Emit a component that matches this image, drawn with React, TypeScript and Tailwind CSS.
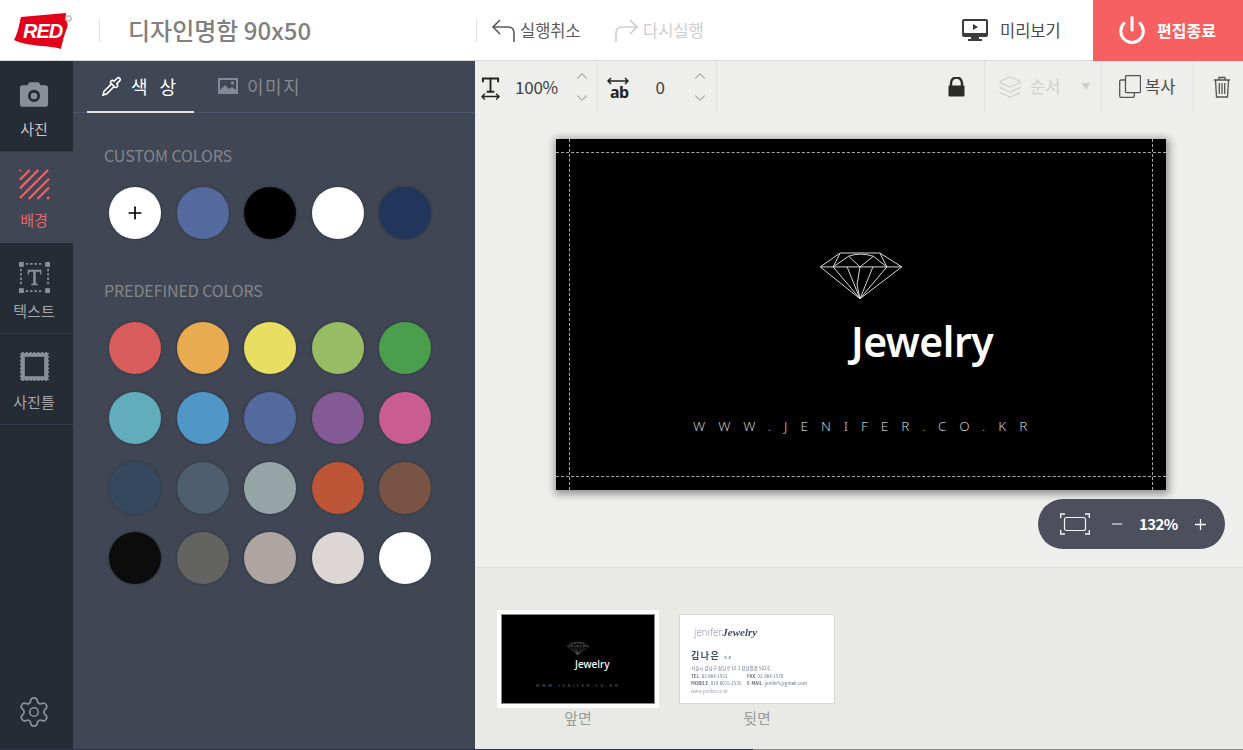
import React from 'react';
import { ChevronUp, ChevronDown, Layers, Pipette, Plus, Minus, Power, Settings } from 'lucide-react';

const customColors = ['#ffffff', '#546a9e', '#000000', '#ffffff', '#22355a'];
const predefinedColors = [
  '#d95c5c', '#e8ab50', '#e8df62', '#97bc64', '#4a9e4c',
  '#62adbb', '#5096c6', '#546a9e', '#835a96', '#c95d8f',
  '#34495f', '#4d5e6e', '#95a5a6', '#bc5637', '#795444',
  '#0c0c0c', '#636360', '#aea5a3', '#dcd7d4', '#ffffff',
];

function Swatch({ color, children }: { color: string; children?: React.ReactNode }) {
  return (
    <div
      className="flex h-[52px] w-[52px] items-center justify-center rounded-full shadow-[0_0_2px_1px_rgba(30,35,45,0.3)]"
      style={{ backgroundColor: color }}
    >
      {children}
    </div>
  );
}

function Logo() {
  return (
    <div className="relative mt-[3px] h-[38px] w-[60px]">
      <svg width="60" height="38" viewBox="0 0 60 38" className="absolute left-0 top-0">
        <path d="M7 4 L52 0 C51 6 55 9 53 15 C50 22 48 30 47 36 C36 32 14 34 0 27 C4 20 5 12 7 4 Z" fill="#e3001b" />
      </svg>
      <span className="absolute left-[9px] top-[4px] font-['Liberation_Sans'] text-[20px] font-bold italic leading-[28px] tracking-[-1px] text-white">
        RED
      </span>
      <span className="absolute left-[51px] top-[2px] h-[7px] w-[7px] rounded-full border-2 border-[#c9c9c9]" />
    </div>
  );
}

function Diamond({ width = 84, color = '#d8d8d8' }: { width?: number; color?: string }) {
  return (
    <svg width={width} height={width * 0.58} viewBox="0 0 84 49" fill="none" stroke={color} strokeWidth="1">
      <path d="M1 16 L21 2 H61 L83 16 L41 48 Z" />
      <path d="M1 16 H83" />
      <path d="M21 2 L14 16 L29.5 5.3 L41 16 L54.5 5.3 L68 16 L61 2" />
      <path d="M29.5 5.3 Q41 1 54.5 5.3" />
      <path d="M14 16 L41 48 L28 16 M41 16 L38 34 L41 48 M54 16 L41 48 L68 16" />
    </svg>
  );
}

function NavItem({ label, icon, active, light }: { label: string; icon: React.ReactNode; active?: boolean; light?: boolean }) {
  return (
    <div
      className={`flex h-[91px] flex-col items-center border-b pr-[5px] pt-[17px] ${
        active ? 'border-transparent bg-[#404653] text-[#e8666a]' : 'border-[#353b4c]'
      } ${!active && light ? 'text-[#c4c6c9]' : ''} ${!active && !light ? 'text-[#a3a6ab]' : ''}`}
    >
      <div className="flex h-[34px] items-center justify-center">{icon}</div>
      <span className="mt-[7px] text-[15px] leading-[20px]">{label}</span>
    </div>
  );
}

function Stepper({ icon, value, width, valueWidth }: { icon: React.ReactNode; value: string; width: string; valueWidth: string }) {
  return (
    <div className={`flex h-[51px] items-center border-r border-[#e0e0de] ${width}`}>
      {icon}
      <span className={`text-center text-[17px] tracking-[-0.2px] text-[#3e3e3e] ${valueWidth}`}>{value}</span>
      <div className="flex flex-col gap-[4px] text-[#b0b0b0]">
        <ChevronUp size={18} strokeWidth={1.5} />
        <ChevronDown size={18} strokeWidth={1.5} />
      </div>
    </div>
  );
}

function FrontCard() {
  return (
    <div className="relative h-[351px] w-[610px] bg-black shadow-[1px_2px_8px_2px_rgba(0,0,0,0.4)]">
      <div className="absolute bottom-0 left-[13px] top-0 border-l border-dashed border-[#a8a8a8]" />
      <div className="absolute bottom-0 right-[13px] top-0 border-l border-dashed border-[#a8a8a8]" />
      <div className="absolute left-0 right-0 top-[13px] border-t border-dashed border-[#a8a8a8]" />
      <div className="absolute bottom-[13px] left-0 right-0 border-t border-dashed border-[#a8a8a8]" />
      <div className="absolute left-[263px] top-[112px]">
        <Diamond />
      </div>
      <span className="absolute left-[295px] top-[174px] font-['Noto_Sans'] text-[41px] font-semibold leading-[56px] tracking-[-0.5px] text-white">
        Jewelry
      </span>
      <span className="absolute left-[137px] top-[277px] whitespace-nowrap font-['Noto_Sans'] text-[13.5px] font-light leading-[20px] tracking-[13px] text-[#c8c8c8]">
        WWW.JENIFER.CO.KR
      </span>
    </div>
  );
}

function FrontThumb() {
  return (
    <div className="relative h-[90px] w-[154px] border border-[#888] bg-black">
      <div className="absolute left-[65px] top-[27px]">
        <Diamond width={22} color="#bbbbbb" />
      </div>
      <span className="absolute left-[73px] top-[41px] font-['Noto_Sans'] text-[10px] font-medium leading-[16px] text-white">
        Jewelry
      </span>
      <span className="absolute left-[34px] top-[67px] whitespace-nowrap text-[4px] leading-[6px] tracking-[2.6px] text-[#777]">
        WWW.JENIFER.CO.KR
      </span>
    </div>
  );
}

function BackThumb() {
  return (
    <div className="relative h-[90px] w-[156px] overflow-hidden border border-[#d8d8d6] bg-white pl-[11px] pt-[10px] text-[#3d4a6b] blur-[0.4px]">
      <div className="ml-[3px] flex items-baseline text-[10px] leading-[14px]">
        <span className="font-['Open_Sans'] font-light text-[#8b90a0]">jenifer</span>
        <span className="font-['Liberation_Serif'] text-[11px] font-bold italic">Jewelry</span>
      </div>
      <div className="mt-[10px] text-[9px] font-bold leading-[13px] tracking-[1.5px]">
        김나은 <span className="text-[3px] font-normal">대표</span>
      </div>
      <div className="whitespace-nowrap text-[4.5px] leading-[7px] text-[#6a7288]">서울시 강남구 청담로 12-3 청담명품 502호</div>
      <div className="mt-[1px] grid w-[126px] grid-cols-[56px_1fr] whitespace-nowrap text-[4.5px] leading-[7px] text-[#6a7288]">
        <span><b>TEL.</b> 02-864-1553</span>
        <span><b>FAX.</b> 02-864-1578</span>
        <span><b>MOBILE.</b> 010-8615-1535</span>
        <span><b>E-MAIL.</b> jenifer5@gmail.com</span>
      </div>
      <div className="mt-[1px] whitespace-nowrap text-[4.5px] leading-[7px] text-[#9a9fae]">www.jenifer.co.kr</div>
    </div>
  );
}

export default function App() {
  return (
    <div className="flex h-[750px] w-[1243px] flex-col overflow-hidden bg-white font-['Noto_Sans_CJK_KR','Noto_Sans',sans-serif]">
      {/* top bar */}
      <header className="flex h-[61px] shrink-0 items-center border-b border-[#d8d8d8] bg-white">
        <div className="ml-[14px] w-[85px]">
          <Logo />
        </div>
        <div className="h-[24px] w-px bg-[#e2e2e2]" />
        <span className="ml-[28px] w-[348px] text-[24px] font-medium text-[#808080]">디자인명함 90x50</span>
        <div className="h-[24px] w-px bg-[#e2e2e2]" />
        <div className="ml-[14px] flex w-[105px] items-center text-[#5a5a5a]">
          <svg width="26" height="26" viewBox="0 0 26 26" fill="none" stroke="currentColor" strokeWidth="1.6">
            <path d="M9 3 L2 10 L9 17" />
            <path d="M2 10 H17 C21 10 23 12 23 16 V25" />
          </svg>
          <span className="ml-[3px] text-[16.5px]">실행취소</span>
        </div>
        <div className="ml-[19px] flex w-[347px] items-center text-[#cdcdcd]">
          <svg width="24" height="26" viewBox="0 0 24 26" fill="none" stroke="currentColor" strokeWidth="1.6">
            <path d="M15 3 L22 10 L15 17" />
            <path d="M22 10 H7 C3 10 1 12 1 16 V25" />
          </svg>
          <span className="ml-[4px] text-[16.5px]">다시실행</span>
        </div>
        <div className="flex items-center text-[#4a4a4a]">
          <svg width="26" height="24" viewBox="0 0 26 24">
            <path d="M2 1 H24 A2 2 0 0 1 26 3 V17 A2 2 0 0 1 24 19 H2 A2 2 0 0 1 0 17 V3 A2 2 0 0 1 2 1 Z" fill="#3c3c3c" />
            <rect x="2" y="3" width="22" height="12" fill="#fff" />
            <path d="M11 6 L16 9 L11 12 Z" fill="#3c3c3c" />
            <path d="M9 19 H17 V21 H20 V23 H6 V21 H9 Z" fill="#3c3c3c" />
          </svg>
          <span className="ml-[12px] text-[16.5px]">미리보기</span>
        </div>
        <div className="ml-auto flex h-[61px] w-[150px] shrink-0 items-center bg-[#f66061] pl-[24px] text-white">
          <Power size={30} strokeWidth={2.4} />
          <span className="ml-[10px] text-[16px] font-bold">편집종료</span>
        </div>
      </header>

      <div className="flex min-h-0 flex-1">
        {/* left nav */}
        <nav className="flex w-[73px] shrink-0 flex-col bg-[#262c35]">
          <NavItem
            light
            label="사진"
            icon={
              <svg width="30" height="27" viewBox="0 0 32 28" className="-mt-[2px]">
                <path
                  fillRule="evenodd"
                  d="M11 1 H21 L23 4 H28 A3 3 0 0 1 31 7 V24 A3 3 0 0 1 28 27 H4 A3 3 0 0 1 1 24 V7 A3 3 0 0 1 4 4 H9 Z M16 9 A6.5 6.5 0 1 0 16 22 A6.5 6.5 0 1 0 16 9 Z M16 12 A3.5 3.5 0 1 1 16 19 A3.5 3.5 0 1 1 16 12 Z"
                  fill="#8a8e96"
                />
              </svg>
            }
          />
          <NavItem
            active
            label="배경"
            icon={
              <svg width="31" height="31" viewBox="0 0 32 32" fill="none" stroke="#e8666a" strokeWidth="2.2" className="-mt-[4px]">
                <path d="M1 2 L2 1 M1 11 L11 1 M1 20 L20 1 M1 30 L30 1 M10 31 L31 10 M19 31 L31 19 M29 31 L31 29" />
              </svg>
            }
          />
          <NavItem
            label="텍스트"
            icon={
              <svg width="31" height="31" viewBox="0 0 32 32">
                <g fill="#8a8e96">
                  <rect x="0" y="0" width="5" height="5" />
                  <rect x="27" y="0" width="5" height="5" />
                  <rect x="0" y="27" width="5" height="5" />
                  <rect x="27" y="27" width="5" height="5" />
                  <path d="M9 8 H23 V13 H21.8 L21.3 10 H17.3 V22 L19.5 22.6 V24 H12.5 V22.6 L14.7 22 V10 H10.7 L10.2 13 H9 Z" />
                </g>
                <path d="M7 2 H25 M7 30 H25 M2 7 V25 M30 7 V25" stroke="#8a8e96" strokeWidth="1.8" strokeDasharray="2.5 2" />
              </svg>
            }
          />
          <NavItem
            label="사진틀"
            icon={
              <svg width="31" height="31" viewBox="0 0 32 32" className="-mt-[4px]">
                <rect x="3.5" y="3.5" width="25" height="25" fill="none" stroke="#8a8e96" strokeWidth="5" />
                <rect x="1" y="1" width="30" height="30" fill="none" stroke="#262c35" strokeWidth="2" strokeDasharray="2 2" />
              </svg>
            }
          />
          <div className="mt-auto flex justify-center pb-[20px] pr-[5px] text-[#8a8e96]">
            <Settings size={34} strokeWidth={1.2} />
          </div>
        </nav>

        {/* colour panel */}
        <aside className="w-[402px] shrink-0 bg-[#404653]">
          <div className="flex h-[52px] items-end border-b border-[#4e566b] pl-[14px]">
            <div className="-mb-px flex h-[52px] w-[107px] items-center gap-[9px] border-b-2 border-[#e6e6e6] pl-[14px] text-white">
              <Pipette size={21} strokeWidth={1.8} />
              <span className="whitespace-nowrap text-[18px] tracking-[4px]">색 상</span>
            </div>
            <div className="flex h-[52px] items-center pl-[24px] text-[#858991]">
              <svg width="20" height="18" viewBox="0 0 20 18">
                <path
                  fillRule="evenodd"
                  d="M0 1 H20 V17 H0 Z M2 3 V13 L7 8 L11 12 L14 10 L18 13 V3 Z"
                  fill="currentColor"
                />
                <circle cx="14.5" cy="6" r="1.7" fill="currentColor" />
              </svg>
              <span className="ml-[9px] text-[18px] tracking-[1.5px]">이미지</span>
            </div>
          </div>
          <div className="pl-[36px] pr-[44px]">
            <p className="ml-[-5px] mt-[31px] text-[16px] leading-[22px] tracking-[-0.1px] text-[#84868a]">CUSTOM COLORS</p>
            <div className="mt-[21px] grid grid-cols-5 gap-x-[15.5px]">
              {customColors.map((c, i) => (
                <Swatch key={i} color={c}>
                  {i === 0 && <Plus size={20} strokeWidth={2} className="text-black" />}
                </Swatch>
              ))}
            </div>
            <p className="ml-[-5px] mt-[40px] text-[16px] leading-[22px] tracking-[-0.1px] text-[#84868a]">PREDEFINED COLORS</p>
            <div className="mt-[21px] grid grid-cols-5 gap-x-[15.5px] gap-y-[18px]">
              {predefinedColors.map((c, i) => (
                <Swatch key={i} color={c} />
              ))}
            </div>
          </div>
        </aside>

        {/* editor */}
        <main className="flex min-w-0 flex-1 flex-col border-l border-[#e8e8e6] bg-[#eeeeec]">
          <div className="flex h-[51px] shrink-0 items-center">
            <Stepper
              width="w-[122px] pl-[5px]"
              valueWidth="w-[73px]"
              value="100%"
              icon={
                <svg width="19" height="24" viewBox="0 0 20 24" fill="none" stroke="#222" strokeWidth="2" className="mt-[3px]">
                  <path d="M2 6 V2 H18 V6 M10 2 V16 M6 16 H14" />
                  <path d="M1 21 H19 M4 18 L1 21 L4 24 M16 18 L19 21 L16 24" strokeWidth="1.5" />
                </svg>
              }
            />
            <Stepper
              width="w-[119px] pl-[9px]"
              valueWidth="w-[62px]"
              value="0"
              icon={
                <div className="relative mt-[3px] h-[22px] w-[22px]">
                  <svg width="22" height="8" viewBox="0 0 22 8" fill="none" stroke="#222" strokeWidth="1.5" className="absolute left-0 top-0">
                    <path d="M1 4 H21 M4 1 L1 4 L4 7 M18 1 L21 4 L18 7" />
                  </svg>
                  <span className="absolute left-[3px] top-[7px] font-['Noto_Sans'] text-[16px] font-bold leading-[16px] tracking-[-0.6px] text-[#222]">ab</span>
                </div>
              }
            />
            <div className="ml-auto mr-[19px]">
              <svg width="17" height="20" viewBox="0 0 17 20">
                <path d="M3 9 V6 A5.5 5.5 0 0 1 14 6 V9" fill="none" stroke="#2b2b2b" strokeWidth="2.4" />
                <rect x="0.5" y="8.5" width="16" height="11" rx="1" fill="#2b2b2b" />
              </svg>
            </div>
            <div className="flex h-[51px] w-[118px] items-center border-x border-[#e0e0de] pl-[13px] text-[#cfcfcf]">
              <Layers size={24} strokeWidth={1.2} />
              <span className="ml-[8px] text-[16.5px]">순서</span>
              <span className="ml-[21px] text-[9px]">▼</span>
            </div>
            <div className="flex h-[51px] w-[92px] items-center border-r border-[#e0e0de] pl-[17px] text-[#4a4a4a]">
              <svg width="22" height="23" viewBox="0 0 22 23" fill="none" stroke="#555" strokeWidth="1.3">
                <rect x="6.5" y="0.7" width="15" height="17" rx="1" />
                <path d="M6.5 5 H2 A1.3 1.3 0 0 0 0.7 6.3 V21 A1.3 1.3 0 0 0 2 22.3 H14 A1.3 1.3 0 0 0 15.3 21 V17.7" />
              </svg>
              <span className="ml-[4px] text-[16.5px]">복사</span>
            </div>
            <div className="flex w-[49px] justify-center pl-[7px]">
              <svg width="18" height="22" viewBox="0 0 18 22" fill="none" stroke="#555" strokeWidth="1.3">
                <path d="M1 4 H17 M6 4 V1.5 H12 V4" />
                <path d="M2.5 4 L3.5 21 H14.5 L15.5 4" />
                <path d="M6.3 7 V18 M9 7 V18 M11.7 7 V18" />
              </svg>
            </div>
          </div>

          <div className="relative flex-1 pl-[80px] pt-[27px]">
            <FrontCard />
            <div className="absolute right-[18px] top-[387px] flex h-[50px] w-[187px] items-center rounded-full bg-[#4d4f5c] pl-[22px] text-white">
              <svg width="30" height="22" viewBox="0 0 30 22" fill="none" stroke="#f2f2f2">
                <rect x="4.5" y="4.5" width="21" height="13" rx="2" strokeWidth="1.2" />
                <path d="M0.7 5 V1 H5 M25 1 H29.3 V5 M0.7 17 V21 H5 M25 21 H29.3 V17" strokeWidth="1.4" />
              </svg>
              <Minus size={16} strokeWidth={1.8} className="ml-[19px]" />
              <span className="ml-[14px] text-[15px] font-bold tracking-[-0.6px]">132%</span>
              <Plus size={17} strokeWidth={1.8} className="ml-[14px]" />
            </div>
          </div>

          <div className="flex h-[182px] shrink-0 items-start border-t border-[#dcdcd8] bg-[#e9e9e5] pl-[21px] pt-[42px]">
            <div className="flex flex-col items-center">
              <div className="border-[4px] border-white">
                <FrontThumb />
              </div>
              <span className="text-[15px] leading-[20px] text-[#9a9a98]">앞면</span>
            </div>
            <div className="ml-[20px] mt-[4px] flex flex-col items-center">
              <BackThumb />
              <span className="mt-[4px] text-[15px] leading-[20px] text-[#9a9a98]">뒷면</span>
            </div>
          </div>
        </main>
      </div>
      <div className="flex h-px shrink-0">
        <div className="w-[753px] bg-[#2c3347]" />
        <div className="flex-1 bg-[#8a8a88]" />
      </div>
    </div>
  );
}
